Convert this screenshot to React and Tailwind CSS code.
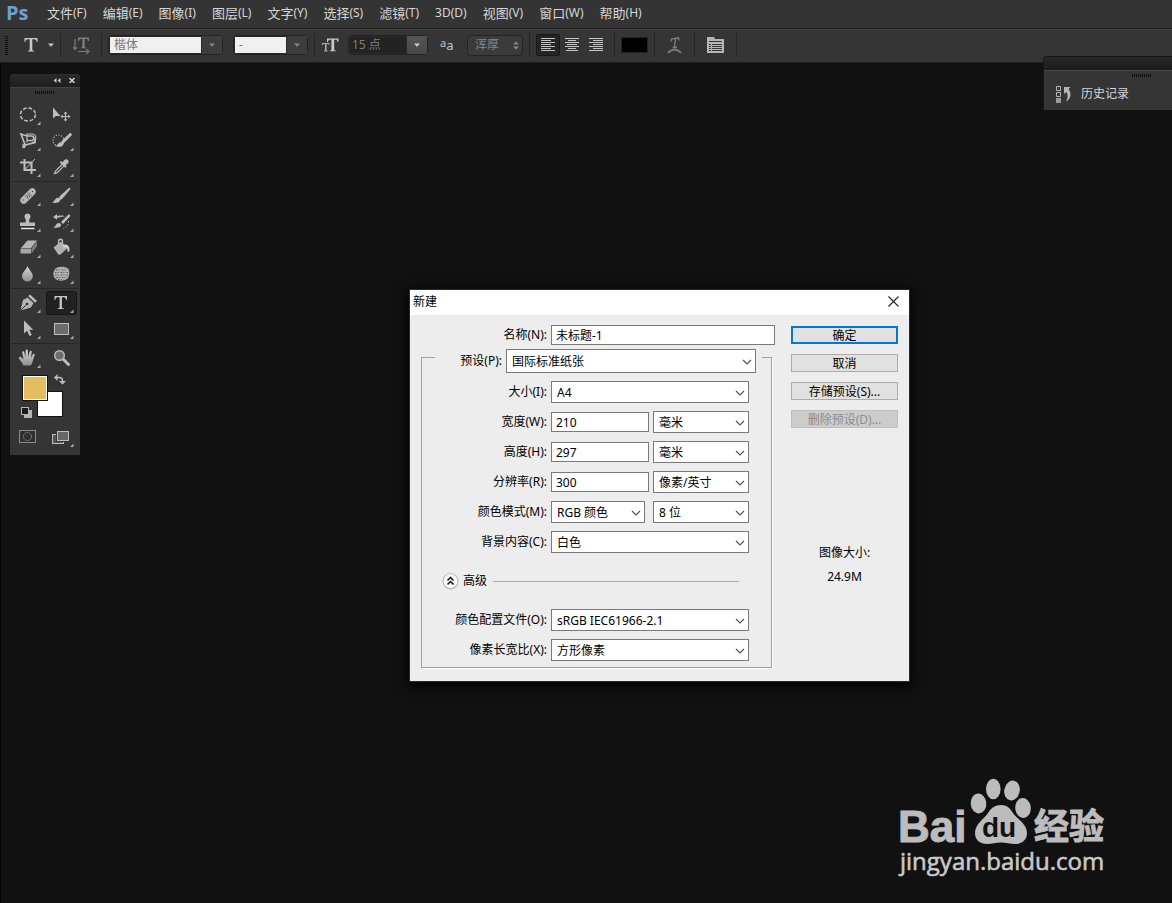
import React from 'react';

const menus = [
  ['文件', '(F)'],
  ['编辑', '(E)'],
  ['图像', '(I)'],
  ['图层', '(L)'],
  ['文字', '(Y)'],
  ['选择', '(S)'],
  ['滤镜', '(T)'],
  ['', '3D(D)'],
  ['视图', '(V)'],
  ['窗口', '(W)'],
  ['帮助', '(H)'],
];

function MenuBar() {
  return (
    <nav className="flex h-7 items-center bg-[#343434] pb-[2px] pl-[6px] text-[#d6d6d6]">
      <span className="w-[33px] font-['Open_Sans',sans-serif] text-[20px] leading-7 font-bold text-[#6f9fd2]">Ps</span>
      <div className="flex gap-4 pl-2">
        {menus.map(([name, key]) => (
          <button key={key} type="button" className="flex items-center whitespace-nowrap text-[13px] leading-5">
            {name}
            <span className="text-xs leading-5">{key}</span>
          </button>
        ))}
      </div>
    </nav>
  );
}

function Separator() {
  return <div className="h-6 w-px shrink-0 bg-[#242424]" />;
}

function DownArrow({ className }) {
  return (
    <svg width="6" height="4" viewBox="0 0 6 4" className={className} aria-hidden="true">
      <path d="M0 0.5h6L3 3.8z" fill="currentColor" />
    </svg>
  );
}

function ComboBox({ label, value, width, dark }) {
  return (
    <div className={'flex h-5 shrink-0 rounded-sm border border-[#222] ' + width}>
      <input
        aria-label={label}
        defaultValue={value}
        className={
          'min-w-0 flex-1 border border-[#2a2a2a] text-xs outline-none ' +
          (dark ? 'bg-[#232323] px-[2px] text-[#7d7d7d]' : 'bg-[#f0f0f0] px-1 text-[#777]')
        }
      />
      <button
        type="button"
        aria-label={label + ' ▾'}
        className={
          'flex w-5 items-center justify-center ' +
          (dark ? 'bg-linear-to-b from-[#555] to-[#484848] text-[#d0d0d0]' : 'bg-[#3d3d3d] text-[#888]')
        }
      >
        <DownArrow />
      </button>
    </div>
  );
}

function AlignButton({ label, lines, active }) {
  return (
    <button
      type="button"
      aria-label={label}
      className={
        'flex h-[22px] w-6 items-center justify-center rounded-xs ' +
        (active ? 'border border-[#191919] bg-[#242424]' : '')
      }
    >
      <svg width="15" height="14" viewBox="0 0 15 14" aria-hidden="true">
        <path d={lines} stroke="#c4c4c4" strokeWidth="1" fill="none" />
      </svg>
    </button>
  );
}

function OptionsBar() {
  return (
    <div className="flex h-[35px] items-center border-t border-b border-t-[#1a1a1a] border-b-[#1c1c1c] bg-[#353535] pb-px shadow-[inset_0_1px_0_#424242]">
      <svg width="3" height="19" viewBox="0 0 3 19" className="ml-[5px]" aria-hidden="true">
        <path d="M1.5 0v19" stroke="#111" strokeWidth="3" strokeDasharray="1 1" />
      </svg>
      <button type="button" aria-label="T" className="ml-4 flex w-[30px] items-center justify-between text-[#c8c8c8]">
        <svg width="14" height="14" viewBox="0 0 14 14" aria-hidden="true">
          <path d="M0.5 0h13v4h-0.8c-.3-2-1-2.8-2.4-2.8H8.3v10c0 1.2.6 1.6 2 1.7v.6H3.7v-.6c1.4-.1 2-.5 2-1.7v-10H3.7C2.3 1.200 1.600 2 1.300 4H0.500z" fill="currentColor" />
        </svg>
        <DownArrow />
      </button>
      <div className="flex w-[41px] items-center pl-[6px]">
        <Separator />
        <button type="button" aria-label="切换文本取向" className="ml-3">
          <svg width="17" height="17" viewBox="0 0 17 17" aria-hidden="true">
            <path d="M5 0.500h11v3.500h-1c-.2-1.500-.8-2-2-2H11.700v7.500c0 .8.300 1 1.300 1v.7H8v-.7c1 0 1.300-.2 1.300-1V2H8c-1.200 0-1.800.5-2 2H5z" fill="#7c7c7c" />
            <path d="M2 2v10M0 10l2 2.500L4 10M5 14.500h10M13 12l3 2.500-3 2.500" stroke="#7c7c7c" strokeWidth="1.200" fill="none" />
          </svg>
        </button>
      </div>
      <div className="ml-[6px] flex items-center gap-[6px]">
        <Separator />
        <ComboBox label="字体" value="楷体" width="w-[115px]" />
      </div>
      <div className="ml-[10px] flex items-center gap-[6px]">
        <ComboBox label="字体样式" value="-" width="w-[75px]" />
        <Separator />
      </div>
      <svg width="17" height="14" viewBox="0 0 17 14" className="ml-[7px]" aria-hidden="true">
        <path d="M5 0.500h11.500v3.500h-.9c-.3-1.600-.9-2.200-2.200-2.200h-1.200v9.400c0 1 .4 1.300 1.600 1.400v.6H7.800v-.6c1.200-.1 1.600-.4 1.600-1.400V1.800H8.200c-1.300 0-2 .6-2.200 2.200H5z" fill="#c8c8c8" />
        <path d="M0 5h7.500v2.300H7C6.800 6.300 6.500 6 5.700 6H4.600v5.800c0 .8.300 1 1 1v.6H2v-.6c.8 0 1-.2 1-1V6H2C1.100 6 .8 6.300.6 7.300H0z" fill="#aaa" />
      </svg>
      <div className="ml-[9px]">
        <ComboBox label="字号" value="15 点" width="w-20" dark />
      </div>
      <span className="ml-3 flex h-5 w-[15px] text-[#c4c4c4]" aria-hidden="true">
        <span className="font-['Noto_Sans'] text-[11px] leading-4">a</span>
        <span className="font-['Noto_Sans'] text-[13px] leading-5">a</span>
      </span>
      <div className="relative ml-3">
        <select
          aria-label="消除锯齿"
          className="block h-[21px] w-14 appearance-none rounded-sm border border-[#242424] bg-[#3b3b3b] pl-[7px] text-xs text-[#8a8a8a] outline-none"
        >
          <option>浑厚</option>
        </select>
        <svg width="6" height="9" viewBox="0 0 6 9" className="pointer-events-none absolute top-[6px] right-1" aria-hidden="true">
          <path d="M0 3.500L3 0.500l3 3zM0 5.500h6l-3 3z" fill="#8a8a8a" />
        </svg>
      </div>
      <div className="ml-[6px] flex items-center gap-[6px]">
        <Separator />
        <div className="flex">
          <AlignButton active label="左对齐文本" lines="M0 .5h14M0 2.500h10M0 4.500h14M0 6.500h10M0 8.500h14M0 10.500h10M0 12.500h14" />
          <AlignButton label="居中对齐文本" lines="M0 .5h14M3 2.500h8M0 4.500h14M2 6.500h10M0 8.500h14M3 10.500h8M1 12.500h12" />
          <AlignButton label="右对齐文本" lines="M0 .5h14M4 2.500h10M0 4.500h14M4 6.500h10M0 8.500h14M4 10.500h10M0 12.500h14" />
        </div>
        <Separator />
      </div>
      <button type="button" aria-label="文本颜色" className="mx-[6px] h-4 w-[27px] border border-[#242424] bg-black" />
      <Separator />
      <button type="button" aria-label="创建文字变形" className="mx-3">
        <svg width="15" height="17" viewBox="0 0 15 17" aria-hidden="true">
          <path d="M4 4.500l.5-2.500L11.500 .8l.5 2.500M8.500 1.500L7.500 10.500M5.500 10.500h4.500" stroke="#808080" strokeWidth="1.300" fill="none" />
          <path d="M1 16c2-2.300 4-3.300 6.500-3.300S12 13.700 14 16" stroke="#808080" strokeWidth="1.700" fill="none" />
        </svg>
      </button>
      <Separator />
      <button type="button" aria-label="字符和段落面板" className="mx-3">
        <svg width="17" height="16" viewBox="0 0 17 16" aria-hidden="true">
          <path d="M0 0h7l1 2h9v14H0z" fill="#b5b5b5" />
          <path d="M8 .5h8M2 4.500h13" stroke="#353535" />
          <path d="M2 7.500h2M5 7.500h10M2 9.500h2M5 9.500h10M2 11.500h2M5 11.500h10M2 13.500h2M5 13.500h10" stroke="#353535" />
        </svg>
      </button>
      <Separator />
    </div>
  );
}

const L = '#bdbdbd';

const tools = {
  marquee: <ellipse cx="16" cy="12.500" rx="7.500" ry="6.500" fill="none" stroke={L} strokeWidth="1.500" strokeDasharray="3.700 1.800" />,
  move: (
    <g>
      <path d="M8 5.500v11l2.800-2.600L15.500 14z" fill={L} />
      <path d="M20.500 10v9M16 14.500h9" stroke={L} strokeWidth="1.200" />
      <path d="M20.500 9.500l2 2.200h-4zM20.500 19.500l2-2.200h-4zM15.500 14.500l2.200-2v4zM25.500 14.500l-2.200-2v4z" fill={L} />
    </g>
  ),
  lasso: (
    <g fill="none" stroke={L}>
      <path d="M12 20l1-3.500L9 6l6 2M13 17l10-2.500V10" strokeWidth="1.700" />
      <path d="M11 16.500l2.500 1.200L11 19.500z" strokeWidth="1.200" />
      <path d="M15 12.500h4.500a2.300 2.300 0 0 0 0-4.600H15" strokeWidth="1.500" />
      <path d="M15 14.500v-8.500h5c5 0 5 8 0 8.500" strokeWidth="1.200" />
    </g>
  ),
  quick: (
    <g>
      <circle cx="13.500" cy="12.500" r="5.500" fill="none" stroke={L} strokeWidth="1.200" strokeDasharray="1.200 1.600" />
      <path d="M25.500 4.500l-8 7.500-1.500 2.500 2 1.500L27 7z" fill={L} />
      <path d="M10.500 18c2-.3 2.500-3.500 5-3.800 1.700-.2 3.200 1 2.700 2.600-.7 2.200-5 2.600-7.700 1.200z" fill={L} />
    </g>
  ),
  crop: (
    <g fill="none" stroke={L}>
      <path d="M12.500 5v11H24M8 8.500h11.500V20" strokeWidth="2" />
      <path d="M13 15.500L23 5" strokeWidth="1" />
    </g>
  ),
  eyedropper: (
    <g>
      <path d="M17.500 8.200l2.200-2.500c1.800-1.800 5.300 1.300 3.500 3.200l-2.500 2.300 1 1.200-1.500 1.400-5.500-5.300 1.300-1.500z" fill={L} />
      <path d="M17 10.500l-6.500 6.500-1 2.500 2.700-.8 6.500-6.500" fill="none" stroke={L} strokeWidth="1.200" />
    </g>
  ),
  heal: (
    <g>
      <rect x="6.500" y="9.500" width="19" height="7" rx="3.500" transform="rotate(-45 16 13)" fill="#b5b5b5" />
      <path d="M12.500 12l5 4.800M15.500 8.800l4.800 5" stroke="#777" strokeWidth="1" />
      <path d="M14.500 12h1M16.500 12h1M15 14h1M17 13.500h1M20 8.500h1M10.500 17h1" stroke="#333" />
    </g>
  ),
  brush: (
    <g>
      <path d="M24.500 4.500l-9 8-1.800 2.700 2 1.700 2.300-2L25.500 6z" fill={L} />
      <path d="M7 19.500c2.500-.5 3-4.500 5.500-4.700 2 0 3.200 1.500 2.500 3-1 2.200-5.500 2.700-8 1.700z" fill={L} />
    </g>
  ),
  stamp: (
    <g fill={L}>
      <path d="M15.500 4.500a3 3 0 0 1 2.300 5c-.8 1-.8 2.500-.3 4H23v3.500H8v-3.500h5.500c.5-1.500.5-3-.3-4a3 3 0 0 1 2.300-5z" />
      <path d="M9 18.800h13.500v1.400H9z" fill="#eee" />
    </g>
  ),
  history: (
    <g>
      <path d="M24 5l-8 8 2 2L25.500 7z" fill={L} />
      <path d="M8 18.500c2.500-.5 3-4 5.500-4.500 2-.2 3 1.500 2.500 2.700-1 2-5.500 2.500-8 1.800z" fill={L} />
      <path d="M8 8l4-3v2c4-.7 6.500-.5 8 .5-3 0-4.500.5-8 1.500v1.800z" fill={L} />
      <path d="M23.500 12c0 4-2 6-5 7.500" fill="none" stroke={L} strokeDasharray="1.200 1.800" />
    </g>
  ),
  eraser: (
    <g>
      <path d="M15.500 5.500h9.500l-6 7.500H9z" fill="#b5b5b5" />
      <path d="M25 6.500v4.500l-5.500 7.500v-5z" fill="#7d7d7d" />
      <path d="M8.500 13.500H19v5H8.500z" fill="#a6a6a6" />
    </g>
  ),
  bucket: (
    <g>
      <path d="M8.500 12.500l7.500-6 6.500 6.500-7 6.500-2 .3z" fill="#b0b0b0" />
      <path d="M13.500 12V6.500c0-3 4-3 4 0V9" fill="none" stroke={L} strokeWidth="1.300" />
      <path d="M17 10c4-1.500 7.500 0 7.500 4.500 0 3-2 3.500-2 .5 0-2-1-2.500-3-2.500z" fill="#d0d0d0" />
    </g>
  ),
  drop: <path d="M15.500 5c1.500 4 5.300 6.500 5.300 10.200a5.400 5.400 0 0 1-10.800 0C10 11.500 14 9 15.500 5z" fill="url(#toolShade)" />,
  sponge: (
    <g>
      <path d="M12 6.500c4-1.200 8-.8 11 1 2 2.500 1.800 7-.5 10-3.500 2.700-8.500 2.800-12 .5-3-3-3.200-8.500 1.500-11.500z" fill="#b0b0b0" />
      <path d="M11 9h11M10 11.500h13M10 14h13M11 16.500h10M13 18.500h6" stroke="#555" strokeWidth="1" strokeDasharray="1.500 1.200 1 2" />
    </g>
  ),
  pen: (
    <g>
      <path d="M18 4.500l7 6.500-2 1.800L16.200 6z" fill={L} />
      <path d="M15.500 7.500l6 5.500-2.500 4.500L8.500 20.500 11 10z" fill="#b5b5b5" />
      <path d="M9 20l5.500-5.500" stroke="#333" strokeWidth="1" />
      <circle cx="15" cy="14" r="1.300" fill="#333" />
    </g>
  ),
  type: <path d="M9.500 6h12.500v4h-.8c-.3-2-1-2.800-2.400-2.800h-1.900v9.500c0 1.200.5 1.500 1.900 1.600v.7h-6.100v-.7c1.400-.1 1.900-.4 1.900-1.600V7.200h-1.900c-1.400 0-2.100.8-2.400 2.800h-.8z" fill="#c8c8c8" />,
  select: <path d="M12 4.500v13l3-2.800 2.500 5.300 2.300-1-2.500-5.200h4z" fill={L} />,
  shape: <rect x="9.500" y="7.500" width="14" height="11" fill="#6c6c6c" stroke={L} />,
  hand: (
    <path
      d="M11.500 20.500c-1-2.500-4-5.500-4.500-7.500-.2-1.300 1.500-1.500 2.500-.5l2 2-1.200-7c-.2-1.500 1.700-1.700 2-.3l1.200 4.800.2-6.500c0-1.500 2-1.500 2.100 0l.5 6.500 1.400-5.500c.4-1.400 2.200-1 2 .4l-.9 6 1.900-3.400c.8-1.300 2.400-.4 1.900.9-1.400 3-1.600 6.500-3.800 10.100z"
      fill="url(#toolShade)"
    />
  ),
  zoom: (
    <g>
      <path d="M17.500 13.500l6 6" stroke={L} strokeWidth="3" strokeLinecap="round" />
      <circle cx="14.500" cy="10.500" r="4.800" fill="#6c6c6c" stroke={L} strokeWidth="1.400" />
    </g>
  ),
  mask: (
    <g fill="none">
      <rect x="7.500" y="6.500" width="16" height="12" fill="#303030" stroke="#8b8b8b" />
      <circle cx="15.500" cy="12.500" r="4" stroke="#aaa" strokeDasharray="1.200 1.300" />
    </g>
  ),
  screen: (
    <g>
      <rect x="7.500" y="10.500" width="11" height="9" fill="#555" stroke={L} />
      <rect x="12.500" y="7.500" width="11" height="9" fill="#777" stroke="#333" strokeWidth="3" />
      <rect x="12.500" y="7.500" width="11" height="9" fill="#666" stroke={L} />
    </g>
  ),
};

const groups = [
  [
    ['椭圆选框工具', 'marquee'],
    ['移动工具', 'move'],
    ['磁性套索工具', 'lasso'],
    ['快速选择工具', 'quick'],
    ['裁剪工具', 'crop'],
    ['吸管工具', 'eyedropper'],
  ],
  [
    ['污点修复画笔工具', 'heal'],
    ['画笔工具', 'brush'],
    ['仿制图章工具', 'stamp'],
    ['历史记录画笔工具', 'history'],
    ['橡皮擦工具', 'eraser'],
    ['油漆桶工具', 'bucket'],
    ['模糊工具', 'drop'],
    ['海绵工具', 'sponge'],
  ],
  [
    ['钢笔工具', 'pen'],
    ['横排文字工具', 'type'],
    ['路径选择工具', 'select'],
    ['矩形工具', 'shape'],
  ],
  [
    ['抓手工具', 'hand'],
    ['缩放工具', 'zoom'],
  ],
];

function Tool({ label, icon }) {
  const single = icon === 'zoom' || icon === 'mask' || icon === 'move';
  return (
    <button type="button" aria-label={label} className="h-[26px] w-[33px]">
      <svg width="33" height="26" viewBox="0 0 33 26" aria-hidden="true">
        {icon === 'type' && <rect x="1.500" y="1.500" width="30" height="23" rx="2" fill="#212121" stroke="#161616" />}
        {tools[icon]}
        {!single && <path d="M28.500 19.500v3.500H25z" fill="#aaa" />}
      </svg>
    </button>
  );
}

function Grip() {
  return (
    <svg width="20" height="3" viewBox="0 0 20 3" aria-hidden="true">
      <path d="M0 1.500h20" stroke="#0c0c0c" strokeWidth="3" strokeDasharray="1 1" />
    </svg>
  );
}

function ToolPanel() {
  return (
    <aside className="absolute top-[11px] left-[10px] w-[70px] rounded-t-sm bg-[#353535]">
      <svg width="0" height="0" className="absolute" aria-hidden="true">
        <defs>
          <linearGradient id="toolShade" x1="0" y1="0" x2="0" y2="1">
            <stop offset="0" stopColor="#d8d8d8" />
            <stop offset="1" stopColor="#8f8f8f" />
          </linearGradient>
        </defs>
      </svg>
      <div className="flex h-[13px] items-center justify-end gap-2 rounded-t-sm bg-linear-to-b from-[#2b2b2b] to-[#1d1d1d] pr-[5px]">
        <button type="button" aria-label="折叠">
          <svg width="8" height="5" viewBox="0 0 8 5" className="block" aria-hidden="true">
            <path d="M3.500 0v5L0.500 2.500zM7.500 0v5l-3-2.500z" fill="#c4c4c4" />
          </svg>
        </button>
        <button type="button" aria-label="关闭">
          <svg width="6" height="5" viewBox="0 0 6 5" className="block" aria-hidden="true">
            <path d="M.5 0l5 5M5.500 0l-5 5" stroke="#d0d0d0" strokeWidth="1.500" />
          </svg>
        </button>
      </div>
      <div className="flex h-[15px] justify-center border-t border-[#444] pt-[3px]">
        <Grip />
      </div>
      <div className="px-[2px]">
        {groups.map((group, i) => (
          <div key={group[0][1]} className={i > 0 ? 'mx-auto mt-px border-t border-[#262626] pt-px' : ''}>
            <div className="grid grid-cols-2">
              {group.map(([label, icon]) => (
                <Tool key={icon} label={label} icon={icon} />
              ))}
            </div>
          </div>
        ))}
      </div>
      <svg width="66" height="52" viewBox="0 0 66 52" className="mx-auto block" role="img" aria-label="前景色和背景色">
        <rect x="25.500" y="20.500" width="25" height="25" fill="#fff" stroke="#111" />
        <rect x="10.500" y="4.500" width="25" height="25" fill="#fff" stroke="#111" />
        <rect x="12" y="6" width="22" height="22" fill="#e6bc60" />
        <path d="M44 6.500h3.500q3 0 3 3V12" fill="none" stroke="#bbb" strokeWidth="1.400" />
        <path d="M45.500 3v7l-3.500-3.500zM47 10h7l-3.500 3.500z" fill="#bbb" />
        <rect x="12" y="39" width="8" height="8" fill="#b5b5b5" />
        <rect x="9.500" y="36.500" width="7" height="7" fill="#1b1b1b" stroke="#b5b5b5" />
      </svg>
      <div className="flex px-[2px] pt-px pb-[5px]">
        <Tool label="快速蒙版" icon="mask" />
        <Tool label="屏幕模式" icon="screen" />
      </div>
    </aside>
  );
}

function HistoryPanel() {
  return (
    <aside className="absolute top-14 right-0 w-[129px] rounded-tl-sm border-t border-l border-[#161616] bg-[#353535]">
      <div className="h-[13px] rounded-tl-sm bg-linear-to-b from-[#282828] to-[#1c1c1c]" />
      <div className="flex h-2 items-end justify-end border-t border-[#484848] pr-5 pb-px">
        <Grip />
      </div>
      <button type="button" className="flex h-8 items-center gap-[10px] pl-3 text-xs text-[#d6d6d6]">
        <svg width="15" height="17" viewBox="0 0 15 17" aria-hidden="true">
          <path d="M.5 .5h4v4h-4zM.5 6.500h4v4h-4z" fill="none" stroke="#b5b5b5" />
          <path d="M0 12h5v5H0z" fill="#9a9a9a" />
          <path d="M8 1h6.500l-2 2c3 3.500 3 9.500-2.500 12.500 2-3.500 2-7 .5-9.500L8 8z" fill="#b5b5b5" />
        </svg>
        历史记录
      </button>
    </aside>
  );
}

function Dropdown({ id, label, value, className, tall }) {
  return (
    <div className={'relative ' + className}>
      <select
        id={id}
        aria-label={label}
        className={
          'block w-full appearance-none border border-[#7a7a7a] bg-white pt-[2px] pr-5 pl-[5px] text-xs text-black outline-none ' +
          (tall ? 'h-6' : 'h-[22px]')
        }
      >
        <option>{value}</option>
      </select>
      <svg
        width="10"
        height="6"
        viewBox="0 0 10 6"
        className={'pointer-events-none absolute right-1 ' + (tall ? 'top-[10px]' : 'top-[9px]')}
        aria-hidden="true"
      >
        <path d="M1 1l4 4 4-4" fill="none" stroke="#555" strokeWidth="1.200" />
      </svg>
    </div>
  );
}

function TextField({ id, value, className }) {
  return (
    <input
      id={id}
      defaultValue={value}
      className={'h-5 border border-[#7a7a7a] bg-white px-1 text-xs text-black outline-none ' + className}
    />
  );
}

function Row({ id, label, children }) {
  return (
    <div className="flex h-[22px] items-center gap-1">
      <label htmlFor={id} className="w-[125px] shrink-0 text-right whitespace-nowrap">
        {label}
      </label>
      {children}
    </div>
  );
}

function NewDialog() {
  const plain = 'h-[18px] border border-[#adadad] bg-[#e1e1e1] leading-[18px]';
  return (
    <section
      role="dialog"
      aria-label="新建"
      className="absolute top-[227px] left-[410px] w-[499px] bg-[#ededed] text-xs text-black shadow-[0_0_0_1px_#2a2a2a,0_3px_12px_2px_#000]"
    >
      <header className="flex h-[25px] items-center justify-between bg-white pr-[10px] pb-[2px] pl-[3px]">
        <h1 className="leading-5">新建</h1>
        <button type="button" aria-label="关闭">
          <svg width="11" height="11" viewBox="0 0 11 11" className="block" aria-hidden="true">
            <path d="M.5 .5l10 10M10.500 .5l-10 10" stroke="#222" strokeWidth="1.100" />
          </svg>
        </button>
      </header>
      <form className="flex justify-between pr-[11px] pb-[13px] pl-[11px]" onSubmit={(e) => e.preventDefault()}>
        <div className="w-[364px] pt-[9px]">
          <div className="pl-px">
            <Row id="name" label="名称(N):">
              <TextField id="name" value="未标题-1" className="w-[224px]" />
            </Row>
          </div>
          <fieldset className="mt-[3px] mr-[13px] border border-[#a0a0a0] pb-[6px] shadow-[1px_1px_0_#fff]">
            <legend className="ml-[13px] h-4 w-[327px]">
              <div className="flex h-6 items-center justify-end gap-1 pr-[6px]">
                <label htmlFor="preset">预设(P):</label>
                <Dropdown id="preset" value="国际标准纸张" className="w-[250px]" tall />
              </div>
            </legend>
            <div className="flex flex-col gap-2 pt-4">
              <Row id="size" label="大小(I):">
                <Dropdown id="size" value="A4" className="w-[198px]" />
              </Row>
              <Row id="width" label="宽度(W):">
                <TextField id="width" value="210" className="w-[98px]" />
                <Dropdown label="宽度单位" value="毫米" className="w-24" />
              </Row>
              <Row id="height" label="高度(H):">
                <TextField id="height" value="297" className="w-[98px]" />
                <Dropdown label="高度单位" value="毫米" className="w-24" />
              </Row>
              <Row id="resolution" label="分辨率(R):">
                <TextField id="resolution" value="300" className="w-[98px]" />
                <Dropdown label="分辨率单位" value="像素/英寸" className="w-24" />
              </Row>
              <Row id="mode" label="颜色模式(M):">
                <Dropdown id="mode" value="RGB 颜色" className="mr-1 w-[94px]" />
                <Dropdown label="位深度" value="8 位" className="w-24" />
              </Row>
              <Row id="background" label="背景内容(C):">
                <Dropdown id="background" value="白色" className="w-[198px]" />
              </Row>
            </div>
            <div className="flex h-14 items-center pr-8 pl-5">
              <button type="button" className="flex items-center gap-1 pr-[6px]">
                <svg width="17" height="17" viewBox="0 0 17 17" aria-hidden="true">
                  <circle cx="8.500" cy="9" r="7.500" fill="#bbb" />
                  <circle cx="8.500" cy="8" r="7.500" fill="#fafafa" stroke="#b5b5b5" />
                  <path d="M5.500 7.500l3-3 3 3M5.500 11.500l3-3 3 3" fill="none" stroke="#111" strokeWidth="1.500" />
                </svg>
                高级
              </button>
              <div className="h-px flex-1 bg-[#a8a8a8]" />
            </div>
            <div className="flex flex-col gap-2">
              <Row id="profile" label="颜色配置文件(O):">
                <Dropdown id="profile" value="sRGB IEC61966-2.1" className="w-[198px]" />
              </Row>
              <Row id="aspect" label="像素长宽比(X):">
                <Dropdown id="aspect" value="方形像素" className="w-[198px]" />
              </Row>
            </div>
          </fieldset>
        </div>
        <div className="flex w-[107px] flex-col gap-[10px] pt-[11px]">
          <button type="submit" className="h-[18px] border-2 border-[#0078d7] bg-[#e1e1e1] leading-4">
            确定
          </button>
          <button type="button" className={plain}>
            取消
          </button>
          <button type="button" className={plain}>
            存储预设(S)...
          </button>
          <button type="button" disabled className="h-[18px] border border-[#bfbfbf] bg-[#ccc] leading-[18px] text-[#8d8d8d]">
            删除预设(D)...
          </button>
          <div className="mt-[105px] flex flex-col gap-1 text-center leading-5">
            <p>图像大小:</p>
            <p>24.9M</p>
          </div>
        </div>
      </form>
    </section>
  );
}

function Watermark() {
  return (
    <svg
      width="240"
      height="120"
      viewBox="0 0 240 120"
      className="absolute right-[47px] bottom-[13px]"
      fill="#bcbcbc"
      role="img"
      aria-label="Baidu 经验"
    >
      <text x="13" y="72" fontSize="44" fontWeight="700" stroke="#bcbcbc" strokeWidth="1" fontFamily="Liberation Sans, sans-serif">Bai</text>
      <ellipse cx="93.500" cy="33.500" rx="7.800" ry="10" transform="rotate(-5 93.500 33.500)" />
      <ellipse cx="108.300" cy="19" rx="7.300" ry="10.300" />
      <ellipse cx="127" cy="20.500" rx="7.700" ry="10" transform="rotate(12 127 20.500)" />
      <ellipse cx="138" cy="38" rx="7.800" ry="10" transform="rotate(-5 138 38)" />
      <path d="M116 35c6 0 9 3 12 8 4 6 14 11 14 20 0 7-5 11-12 11-5 0-9-1.500-14-1.500S107 74 102 74c-7 0-12-4-12-11 0-9 9-14 13-20 3-5 7-8 13-8z" />
      <text x="97" y="67" fontSize="28" fontWeight="700" fill="#111" fontFamily="Liberation Sans, sans-serif">du</text>
      <text x="149" y="69" fontSize="35" fontWeight="700" stroke="#bcbcbc" strokeWidth="1" fontFamily="Noto Sans CJK SC, sans-serif">经验</text>
      <text x="15" y="100" fontSize="24" fontWeight="400" stroke="#c9c9c9" strokeWidth="0.600" fill="#c9c9c9" fontFamily="Open Sans, sans-serif">jingyan.baidu.com</text>
    </svg>
  );
}

export default function App() {
  return (
    <div className="relative flex min-h-screen flex-col bg-[#111] font-['Noto_Sans','Noto_Sans_CJK_SC',sans-serif]">
      <MenuBar />
      <OptionsBar />
      <main className="relative flex-1 shadow-[inset_1px_0_0_#000]">
        <ToolPanel />
        <NewDialog />
        <Watermark />
      </main>
      <HistoryPanel />
    </div>
  );
}
